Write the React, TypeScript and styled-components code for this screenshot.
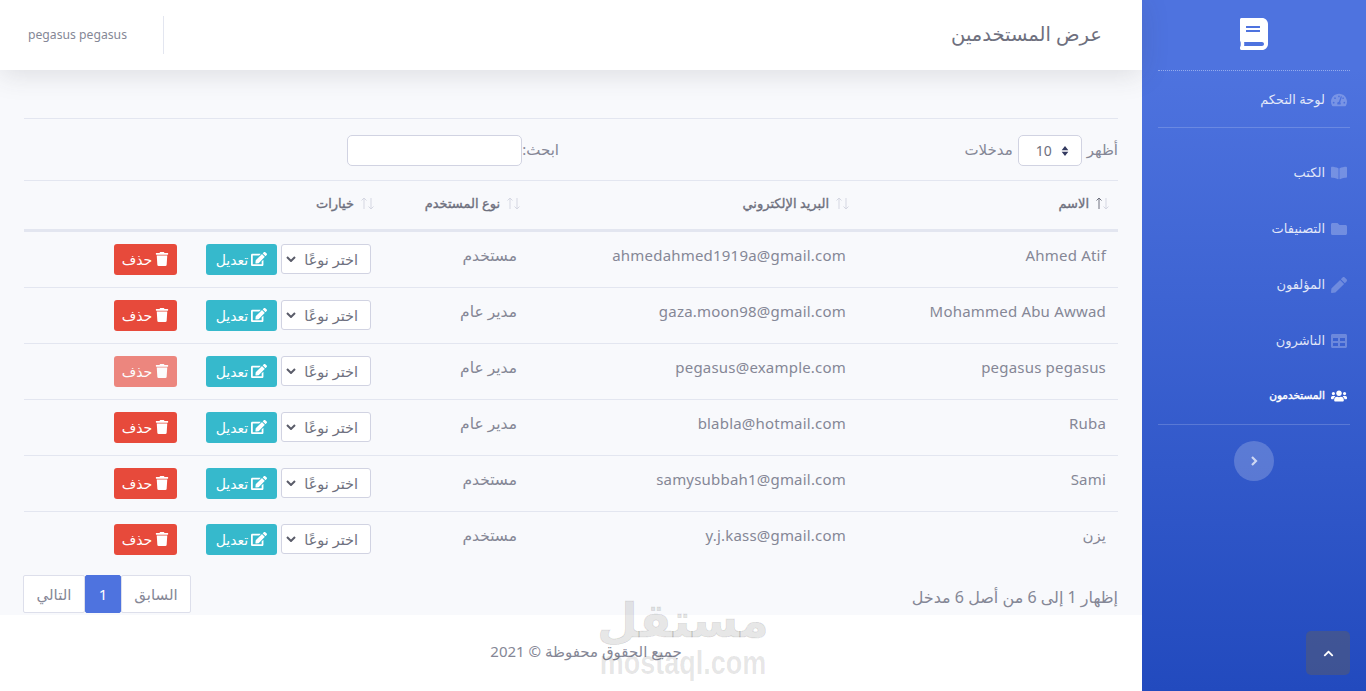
import styled, { createGlobalStyle } from "styled-components"
import {
  FaBook,
  FaBookOpen,
  FaChevronUp,
  FaEdit,
  FaFolder,
  FaPen,
  FaTable,
  FaTachometerAlt,
  FaTrash,
  FaUsers,
} from "react-icons/fa"

const fontStack = `"Noto Sans", "DejaVu Sans", sans-serif`

const GlobalStyle = createGlobalStyle`
  html, body {
    margin: 0;
    height: 100%;
    overflow: hidden;
    background: #fff;
  }
  body {
    font-family: ${fontStack};
    font-size: 16px;
    line-height: 1.5;
    color: #858796;
  }
  * { box-sizing: border-box; }
`

const Page = styled.div`
  direction: rtl;
  display: flex;
  width: 1366px;
  height: 691px;
  position: relative;
  overflow: hidden;
`

const Sidebar = styled.aside`
  flex: 0 0 224px;
  display: flex;
  flex-direction: column;
  padding: 0 16px;
  background: linear-gradient(180deg, #4e73df 10%, #224abe 100%);
`

const Brand = styled.div`
  height: 71px;
  display: flex;
  align-items: center;
  justify-content: center;
  color: #fff;
  font-size: 32px;
  border-bottom: 1px dotted rgba(255, 255, 255, 0.4);

  svg {
    transform: scaleX(-1);
    margin-bottom: 3px;
  }
`

const NavItem = styled.a<{ $active?: boolean }>`
  height: 56px;
  display: flex;
  align-items: center;
  gap: 6px;
  padding: ${(p) => (p.$active ? "0 3px 0 0" : "2px 3px 0 0")};
  font-size: ${(p) => (p.$active ? "10.5px" : "13px")};
  color: ${(p) => (p.$active ? "#fff" : "rgba(255, 255, 255, 0.85)")};
  -webkit-text-stroke: ${(p) => (p.$active ? "0.4px #fff" : "0")};

  svg {
    flex: none;
    font-size: 16px;
    color: ${(p) => (p.$active ? "#fff" : "rgba(255, 255, 255, 0.25)")};
  }
`

const SideRule = styled.hr`
  margin: 0;
  border: none;
  border-top: 1px solid rgba(255, 255, 255, 0.18);
`

const NavGroup = styled.nav`
  padding-top: 16px;
`

const Toggle = styled.button`
  align-self: center;
  width: 40px;
  height: 40px;
  margin-top: 16px;
  border: none;
  border-radius: 50%;
  display: flex;
  align-items: center;
  justify-content: center;
  background: rgba(255, 255, 255, 0.2);
`

const ToggleArrow = styled.svg`
  width: 8px;
  height: 10px;
  fill: none;
  stroke: rgba(255, 255, 255, 0.7);
  stroke-width: 2.2;
`

const ScrollTop = styled.a`
  position: absolute;
  left: 1306px;
  top: 631px;
  width: 44px;
  height: 44px;
  border-radius: 5px;
  display: flex;
  align-items: center;
  justify-content: center;
  font-size: 11px;
  color: #fff;
  background: rgba(90, 92, 105, 0.5);
`

const Main = styled.div`
  flex: 1;
  min-width: 0;
  display: flex;
  flex-direction: column;
  background: #f8f9fc;
`

const Topbar = styled.header`
  height: 70px;
  flex: none;
  display: flex;
  align-items: center;
  justify-content: space-between;
  padding: 0 40px 0 14px;
  background: #fff;
  box-shadow: 0 4px 28px rgba(58, 59, 69, 0.15);
`

const PageTitle = styled.h1`
  margin: 0 0 2px;
  font-size: 19.5px;
  font-weight: 400;
  color: #6e707e;
`

const UserBox = styled.div`
  height: 38px;
  display: flex;
  align-items: center;
  padding: 0 36px 0 14px;
  font-size: 12.2px;
  color: #858796;
  border-right: 1px solid #e3e6f0;
`

const Content = styled.main`
  flex: 1;
  padding: 48px 24px 0;
`

const Tools = styled.div`
  height: 63px;
  display: grid;
  grid-template-columns: 547px 547px;
  padding-top: 16px;
  border-top: 1px solid #e3e6f0;
  border-bottom: 1px solid #e3e6f0;
`

const LengthBox = styled.label`
  display: flex;
  align-items: flex-start;
  gap: 5px;
  font-size: 15px;
  line-height: 28px;
`

const SearchBox = styled.label`
  display: flex;
  align-items: flex-start;
  padding-right: 12px;
  font-size: 15px;
  line-height: 28px;
`

const Field = styled.input`
  width: 175px;
  height: 31px;
  padding: 0 12px;
  border: 1px solid #d1d3e2;
  border-radius: 5px;
  background: #fff;
`

const LengthSelect = styled.div`
  width: 64px;
  height: 31px;
  display: flex;
  align-items: center;
  justify-content: space-between;
  padding: 0 12px 0 17px;
  font-size: 14px;
  color: #6e707e;
  border: 1px solid #d1d3e2;
  border-radius: 5px;
  background: #fff;
`

const Spinner = styled.svg`
  width: 8px;
  height: 10px;
  fill: #343a60;
`

const Table = styled.table`
  width: 1094px;
  table-layout: fixed;
  border-collapse: collapse;
`

const Col = styled.col<{ $w: number }>`
  width: ${(p) => p.$w}px;
`

const Th = styled.th`
  height: 49px;
  padding: 0 8px 3px 12px;
  text-align: right;
  border-bottom: 3px solid #e3e6f0;
`

const HeadInner = styled.span`
  display: flex;
  align-items: center;
  gap: 6px;
  font-size: 13px;
  font-weight: 400;
  color: #6e707e;
  -webkit-text-stroke: 0.35px #6e707e;
`

const SortIcon = styled.svg`
  flex: none;
  width: 15px;
  height: 13px;
  fill: none;
  stroke-width: 1;
`

const Td = styled.td<{ $latin?: boolean }>`
  height: 56px;
  padding: 11px 12px 12px;
  vertical-align: top;
  text-align: right;
  font-size: ${(p) => (p.$latin ? "15px" : "15.5px")};
  letter-spacing: ${(p) => (p.$latin ? "0.2px" : "0")};
  line-height: 24px;
  border-top: 1px solid #e3e6f0;
  overflow: hidden;
  white-space: nowrap;
`

const Options = styled.div`
  display: flex;
  align-items: center;
  margin-top: 1px;
`

const RoleSelect = styled.select`
  appearance: none;
  width: 90px;
  height: 30px;
  padding: 0 12px 0 20px;
  font-family: inherit;
  font-size: 14.5px;
  color: #6e707e;
  border: 1px solid #d1d3e2;
  border-radius: 3px;
  background: #fff
    url("data:image/svg+xml,%3csvg xmlns='http://www.w3.org/2000/svg' width='10' height='6'%3e%3cpath fill='none' stroke='%235a5c69' stroke-width='2' d='M1 1l4 4 4-4'/%3e%3c/svg%3e")
    no-repeat left 4px center;
`

const ActionButton = styled.button<{ $tone: "edit" | "remove"; $muted?: boolean }>`
  height: 31px;
  display: inline-flex;
  align-items: center;
  justify-content: center;
  gap: 3px;
  padding: 0;
  border: none;
  border-radius: 3px;
  font-family: inherit;
  font-size: 14px;
  color: #fff;
  width: ${(p) => (p.$tone === "edit" ? "71px" : "63px")};
  margin-right: ${(p) => (p.$tone === "edit" ? "4px" : "29px")};
  background: ${(p) => (p.$tone === "edit" ? "#36b9cc" : "#e74a3b")};
  opacity: ${(p) => (p.$muted ? 0.65 : 1)};

  svg {
    font-size: ${(p) => (p.$tone === "edit" ? "16px" : "14px")};
  }
`

const TableFoot = styled.div`
  display: flex;
  align-items: flex-start;
  justify-content: space-between;
  margin-top: 7px;
`

const Info = styled.div`
  padding-top: 11px;
  font-size: 16px;
`

const Pager = styled.div`
  display: flex;
  margin-top: 1px;
  margin-left: -1px;
`

const PageLink = styled.a<{ $active?: boolean; $w: number }>`
  width: ${(p) => p.$w}px;
  height: 38px;
  display: flex;
  align-items: center;
  justify-content: center;
  font-size: 15px;
  color: ${(p) => (p.$active ? "#fff" : "#858796")};
  background: ${(p) => (p.$active ? "#4e73df" : "#fff")};
  border: 1px solid ${(p) => (p.$active ? "#4e73df" : "#dddfeb")};
  border-radius: 2px;
`

const Footer = styled.footer`
  height: 76px;
  flex: none;
  display: flex;
  align-items: center;
  justify-content: center;
  padding: 0 0 3px 30px;
  font-size: 15px;
  color: #858796;
  background: #fff;
`

const Watermark = styled.div`
  position: absolute;
  left: 600px;
  top: 590px;
  width: 166px;
  display: flex;
  flex-direction: column;
  align-items: center;
  pointer-events: none;
  color: rgba(0, 0, 0, 0.1);
  font-weight: 700;
  direction: ltr;
`

const WatermarkAr = styled.span`
  font-size: 47px;
  line-height: 58px;
  -webkit-text-stroke: 1px rgba(0, 0, 0, 0.1);
`

const WatermarkEn = styled.span`
  font-family: "Liberation Sans", sans-serif;
  font-size: 27px;
  line-height: 30px;
  transform: scaleY(1.2);
`

const nav = [
  { label: "الكتب", icon: <FaBookOpen /> },
  { label: "التصنيفات", icon: <FaFolder /> },
  { label: "المؤلفون", icon: <FaPen /> },
  { label: "الناشرون", icon: <FaTable /> },
  { label: "المستخدمون", icon: <FaUsers />, active: true },
]

const users = [
  { name: "Ahmed Atif", email: "ahmedahmed1919a@gmail.com", role: "مستخدم" },
  { name: "Mohammed Abu Awwad", email: "gaza.moon98@gmail.com", role: "مدير عام" },
  { name: "pegasus pegasus", email: "pegasus@example.com", role: "مدير عام", self: true },
  { name: "Ruba", email: "blabla@hotmail.com", role: "مدير عام" },
  { name: "Sami", email: "samysubbah1@gmail.com", role: "مستخدم" },
  { name: "يزن", email: "y.j.kass@gmail.com", role: "مستخدم" },
]

const Sort = ({ active }: { active?: boolean }) => (
  <SortIcon viewBox="0 0 15 13">
    <path d="M4 12V1M1.5 3.5L4 1l2.5 2.5" stroke={active ? "#6e707e" : "#d5d7e2"} />
    <path d="M11 1v11M8.500 9.500L11 12l2.500-2.500" stroke="#d5d7e2" />
  </SortIcon>
)

const Head = ({ label, active }: { label: string; active?: boolean }) => (
  <Th>
    <HeadInner>
      <Sort active={active} />
      {label}
    </HeadInner>
  </Th>
)

export default function App() {
  return (
    <Page>
      <GlobalStyle />
      <Sidebar>
        <Brand>
          <FaBook />
        </Brand>
        <NavItem>
          <FaTachometerAlt />
          لوحة التحكم
        </NavItem>
        <SideRule />
        <NavGroup>
          {nav.map((item) => (
            <NavItem key={item.label} $active={item.active}>
              {item.icon}
              {item.label}
            </NavItem>
          ))}
        </NavGroup>
        <SideRule />
        <Toggle>
          <ToggleArrow viewBox="0 0 8 10">
            <path d="M2 1l4 4-4 4" />
          </ToggleArrow>
        </Toggle>
      </Sidebar>

      <Main>
        <Topbar>
          <PageTitle>عرض المستخدمين</PageTitle>
          <UserBox>pegasus pegasus</UserBox>
        </Topbar>

        <Content>
          <Tools>
            <LengthBox>
              أظهر
              <LengthSelect>
                <Spinner viewBox="0 0 8 12">
                  <path d="M4 0l4 5H0zM4 12L0 7h8z" />
                </Spinner>
                10
              </LengthSelect>
              مدخلات
            </LengthBox>
            <SearchBox>
              ابحث:
              <Field type="search" />
            </SearchBox>
          </Tools>

          <Table>
            <colgroup>
              <Col $w={260} />
              <Col $w={329} />
              <Col $w={146} />
              <Col $w={359} />
            </colgroup>
            <thead>
              <tr>
                <Head label="الاسم" active />
                <Head label="البريد الإلكتروني" />
                <Head label="نوع المستخدم" />
                <Head label="خيارات" />
              </tr>
            </thead>
            <tbody>
              {users.map((user) => (
                <tr key={user.email}>
                  <Td $latin>{user.name}</Td>
                  <Td $latin>{user.email}</Td>
                  <Td>{user.role}</Td>
                  <Td>
                    <Options>
                      <RoleSelect defaultValue="">
                        <option value="">اختر نوعًا</option>
                      </RoleSelect>
                      <ActionButton $tone="edit">
                        <FaEdit />
                        تعديل
                      </ActionButton>
                      <ActionButton $tone="remove" $muted={user.self}>
                        <FaTrash />
                        حذف
                      </ActionButton>
                    </Options>
                  </Td>
                </tr>
              ))}
            </tbody>
          </Table>

          <TableFoot>
            <Info>إظهار 1 إلى 6 من أصل 6 مدخل</Info>
            <Pager>
              <PageLink $w={70}>السابق</PageLink>
              <PageLink $w={36} $active>
                1
              </PageLink>
              <PageLink $w={62}>التالي</PageLink>
            </Pager>
          </TableFoot>
        </Content>

        <Footer>جميع الحقوق محفوظة © 2021</Footer>
      </Main>

      <ScrollTop>
        <FaChevronUp />
      </ScrollTop>
      <Watermark>
        <WatermarkAr>مستقل</WatermarkAr>
        <WatermarkEn>mostaql.com</WatermarkEn>
      </Watermark>
    </Page>
  )
}
